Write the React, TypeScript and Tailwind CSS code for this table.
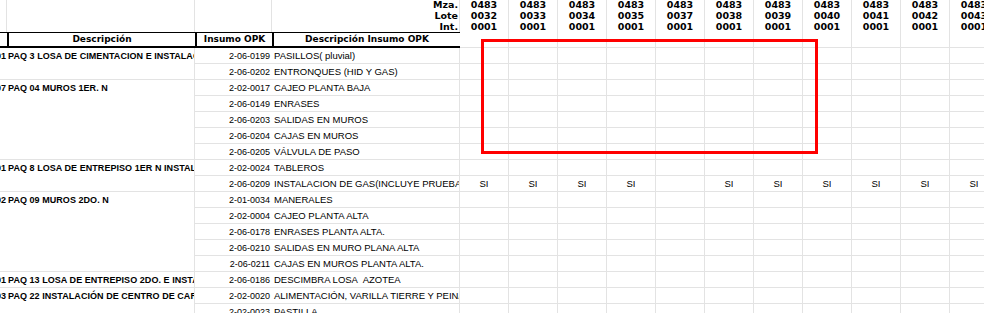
import React from "react";

const lots = ["0032", "0033", "0034", "0035", "0037", "0038", "0039", "0040", "0041", "0042", "0043"];

type Row = { code: string; desc: string; si?: boolean[] };
type Group = { num: string; title: string; rows: Row[] };

const siRow = [true, true, true, true, false, true, true, true, true, true, true];

const groups: Group[] = [
  {
    num: "0001",
    title: "PAQ 3 LOSA DE CIMENTACION E INSTALACIONES",
    rows: [
      { code: "2-06-0199", desc: "PASILLOS( pluvial)" },
      { code: "2-06-0202", desc: "ENTRONQUES (HID Y GAS)" },
    ],
  },
  {
    num: "0007",
    title: "PAQ 04 MUROS 1ER. N",
    rows: [
      { code: "2-02-0017", desc: "CAJEO PLANTA BAJA" },
      { code: "2-06-0149", desc: "ENRASES" },
      { code: "2-06-0203", desc: "SALIDAS EN MUROS" },
      { code: "2-06-0204", desc: "CAJAS EN MUROS" },
      { code: "2-06-0205", desc: "VÁLVULA DE PASO" },
    ],
  },
  {
    num: "0001",
    title: "PAQ 8 LOSA DE ENTREPISO 1ER N INSTALACIONES",
    rows: [
      { code: "2-02-0024", desc: "TABLEROS" },
      { code: "2-06-0209", desc: "INSTALACION DE GAS(INCLUYE PRUEBA)", si: siRow },
    ],
  },
  {
    num: "0002",
    title: "PAQ 09 MUROS 2DO. N",
    rows: [
      { code: "2-01-0034", desc: "MANERALES" },
      { code: "2-02-0004", desc: "CAJEO PLANTA ALTA" },
      { code: "2-06-0178", desc: "ENRASES PLANTA ALTA." },
      { code: "2-06-0210", desc: "SALIDAS EN MURO PLANA ALTA" },
      { code: "2-06-0211", desc: "CAJAS EN MUROS PLANTA ALTA." },
    ],
  },
  {
    num: "0001",
    title: "PAQ 13 LOSA DE ENTREPISO 2DO. E INSTALACIONES",
    rows: [{ code: "2-06-0186", desc: "DESCIMBRA LOSA\u00a0 AZOTEA" }],
  },
  {
    num: "0003",
    title: "PAQ 22 INSTALACIÓN DE CENTRO DE CARGA",
    rows: [
      { code: "2-02-0020", desc: "ALIMENTACIÓN, VARILLA TIERRE Y PEINA DE CONEXIÓN" },
      { code: "2-02-0023", desc: "PASTILLA" },
    ],
  },
];

const spanClass: Record<number, string> = {
  1: "row-span-1",
  2: "row-span-2",
  5: "row-span-5",
};

const arial = "font-['Liberation_Sans',Arial,sans-serif]";
const verdana = "font-['DejaVu_Sans',Verdana,sans-serif]";

export default function App() {
  const cells: React.ReactNode[] = [];
  let k = 0;

  // top header rows
  cells.push(<div key={k++} className="row-span-3 border-r border-[#e3e3e3]" />);
  cells.push(<div key={k++} className="row-span-3 border-r border-[#e3e3e3]" />);
  cells.push(<div key={k++} className="row-span-3 border-r border-[#e3e3e3]" />);
  cells.push(
    <div key={k++} className={`flex items-end justify-end overflow-hidden border-r border-[#e3e3e3] pr-[1px] text-[9.5px] font-bold leading-[11px] text-black ${verdana}`}>
      <span>Mza.</span>
    </div>
  );
  lots.forEach((l) => {
    cells.push(
      <div key={k++} className={`row-span-4 flex flex-col items-center overflow-hidden border-r border-b border-[#e3e3e3] text-[9.5px] font-bold leading-[11px] text-black ${verdana}`}>
        <span className="-mt-[1px]">0483</span>
        <span>{l}</span>
        <span>0001</span>
      </div>
    );
  });
  cells.push(
    <div key={k++} className={`flex items-end justify-end overflow-hidden border-r border-[#e3e3e3] pr-[1px] text-[9.5px] font-bold leading-[11px] text-black ${verdana}`}>
      <span>Lote</span>
    </div>
  );
  cells.push(
    <div key={k++} className={`flex items-end justify-end overflow-hidden border-r border-[#e3e3e3] pr-[1px] text-[9.5px] font-bold leading-[11px] text-black ${verdana}`}>
      <span>Int.</span>
    </div>
  );

  // column header row
  const hdr = `flex items-center justify-center overflow-hidden whitespace-nowrap border-t border-b-2 border-black text-[9px] font-bold text-black ${verdana}`;
  cells.push(<div key={k++} className={hdr} />);
  cells.push(<div key={k++} className={`${hdr} border-l-2`}>Descripción</div>);
  cells.push(<div key={k++} className={`${hdr} border-l-2`}>Insumo OPK</div>);
  cells.push(<div key={k++} className={`${hdr} border-l-2`}>Descripción Insumo OPK</div>);

  // data rows
  groups.forEach((g) => {
    g.rows.forEach((r, i) => {
      if (i === 0) {
        cells.push(
          <div key={k++} className={`${spanClass[g.rows.length]} flex justify-end overflow-hidden border-b border-[#e3e3e3] pr-[1px] text-[9px] font-bold leading-[16px] text-black ${arial}`}>
            <span className="whitespace-nowrap">{g.num}</span>
          </div>
        );
        cells.push(
          <div key={k++} className={`${spanClass[g.rows.length]} overflow-hidden whitespace-nowrap border-r border-b border-[#e3e3e3] pl-[1px] text-[9px] font-bold leading-[16px] tracking-[0.05px] text-black ${arial}`}>
            {g.title}
          </div>
        );
      }
      cells.push(
        <div key={k++} className={`overflow-hidden whitespace-nowrap border-b border-[#e3e3e3] pr-[2px] text-right text-[9px] leading-[16px] text-black ${arial}`}>
          {r.code}
        </div>
      );
      cells.push(
        <div key={k++} className={`overflow-hidden whitespace-nowrap border-r border-b border-[#e3e3e3] pl-[2px] text-[9.5px] leading-[16px] text-black ${arial}`}>
          {r.desc}
        </div>
      );
      lots.forEach((_, j) => {
        cells.push(
          <div key={k++} className={`overflow-hidden whitespace-nowrap border-r border-b border-[#e3e3e3] text-center text-[9.5px] leading-[16px] text-black ${arial}`}>
            {r.si && r.si[j] ? "SI" : ""}
          </div>
        );
      });
    });
  });

  return (
    <div className="relative h-[313px] w-[984px] overflow-hidden bg-white">
      <div className="grid grid-cols-[7px_188px_77px_188px_repeat(11,49px)] grid-rows-[10px_11px_11px_16px_repeat(17,16px)]">
        {cells}
      </div>
      <div className="absolute left-[481px] top-[39px] h-[115px] w-[337px] border-[3px] border-[#ff0000]" />
    </div>
  );
}
